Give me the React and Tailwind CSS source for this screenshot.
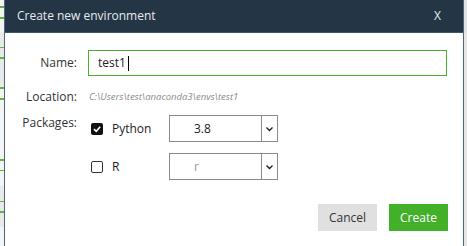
import React from "react";

const leftStrip = [
  { h: 6, c: "#f4f4f4" },
  { h: 2, c: "#5cb840" },
  { h: 10, c: "#f4f4f4" },
  { h: 2, c: "#5cb840" },
  { h: 13, c: "#f4f4f4" },
  { h: 15, c: "#e9e9e9" },
  { h: 2, c: "#5cb840" },
  { h: 9, c: "#e9e9e9" },
  { h: 2, c: "#5cb840" },
  { h: 29, c: "#e9e9e9" },
  { h: 2, c: "#5cb840" },
  { h: 9, c: "#f4f4f4" },
  { h: 2, c: "#5cb840" },
  { h: 61, c: "#f4f4f4" },
  { h: 2, c: "#5cb840" },
  { h: 9, c: "#f4f4f4" },
  { h: 2, c: "#5cb840" },
  { h: 15, c: "#f4f4f4" },
  { h: 15, c: "#e9e9e9" },
  { h: 2, c: "#5cb840" },
  { h: 9, c: "#e9e9e9" },
  { h: 2, c: "#5cb840" },
  { h: 14, c: "#e9e9e9" },
  { h: 20, c: "#f4f4f4" },
];

function Chevron() {
  return (
    <svg width="9" height="6" viewBox="0 0 9 6">
      <path d="M1.5 1.5 L4.5 4.5 L7.5 1.5" fill="none" stroke="#222" strokeWidth="1.4" />
    </svg>
  );
}

function Select({ value, muted }) {
  return (
    <div className="w-[109px] h-[27px] border border-[#8a8a8a] flex bg-white">
      <div
        className={
          "flex-1 flex items-center pl-[24px] text-[12px] " +
          (muted ? "text-[#9a9a9a]" : "text-[#222]")
        }
      >
        {value}
      </div>
      <div className="w-[16px] border-l border-[#8a8a8a] flex items-center justify-center">
        <Chevron />
      </div>
    </div>
  );
}

function CheckBox({ checked }) {
  if (checked) {
    return (
      <div className="w-[12px] h-[12px] bg-[#111] rounded-[2px] flex items-center justify-center">
        <svg width="10" height="10" viewBox="0 0 10 10">
          <path d="M2 5.2 L4.2 7.3 L8.2 2.8" fill="none" stroke="#fff" strokeWidth="1.6" />
        </svg>
      </div>
    );
  }
  return <div className="w-[12px] h-[12px] border-[1.5px] border-[#333] rounded-[2px] bg-white" />;
}

export default function App() {
  return (
    <div className="w-[467px] h-[246px] flex overflow-hidden bg-[#e8e8e8] font-['Open_Sans',sans-serif]">
      <div className="w-[4px] flex flex-col">
        {leftStrip.map((s, i) => (
          <div key={i} style={{ height: s.h, background: s.c }} />
        ))}
      </div>
      <div className="w-[460px] h-[246px] border-x border-[#4d6577] bg-white flex flex-col">
        <div className="h-[33px] bg-[#243545] border-b border-[#3e5566] flex items-center justify-between pl-[12px] pr-[22px]">
          <span className="text-[12px] text-[#e6ebef] leading-none">Create new environment</span>
          <span className="text-[12px] text-[#e6ebef] leading-none">X</span>
        </div>

        <div className="flex items-center mt-[17px]">
          <div className="w-[72px] text-right text-[12px] text-[#333]">Name:</div>
          <div className="ml-[11px] w-[359px] h-[26px] border border-[#4cae2e] flex items-center pl-[9px] text-[12px] text-[#222]">
            test1
            <span className="ml-[2px] w-[1px] h-[15px] bg-black" />
          </div>
        </div>

        <div className="flex items-center mt-[14px] h-[14px]">
          <div className="w-[72px] text-right text-[12px] text-[#333] leading-[14px]">Location:</div>
          <div className="ml-[12px] text-[9.5px] italic text-[#8a8a8a] leading-[14px]">
            C:\Users\test\anaconda3\envs\test1
          </div>
        </div>

        <div className="flex items-start mt-[11px]">
          <div className="w-[72px] text-right text-[12px] text-[#333] leading-[14px] pt-[1px]">Packages:</div>
          <div className="ml-[11px] flex flex-col gap-[11px]">
            <div className="flex items-center">
              <div className="w-[81px] flex items-center pl-[3px]">
                <CheckBox checked />
                <span className="ml-[9px] text-[12px] text-[#222]">Python</span>
              </div>
              <Select value="3.8" />
            </div>
            <div className="flex items-center">
              <div className="w-[81px] flex items-center pl-[3px]">
                <CheckBox />
                <span className="ml-[9px] text-[12px] text-[#222]">R</span>
              </div>
              <Select value="r" muted />
            </div>
          </div>
        </div>

        <div className="flex justify-end gap-[12px] mt-[24px] pr-[15px]">
          <div className="w-[59px] h-[27px] bg-[#e0e0e0] flex items-center justify-center text-[12px] text-[#333]">
            Cancel
          </div>
          <div className="w-[59px] h-[27px] bg-[#43b02a] flex items-center justify-center text-[12px] text-white">
            Create
          </div>
        </div>
      </div>
      <div className="w-[3px] flex flex-col">
        <div className="h-[33px] bg-[#dfe3e6]" />
        <div className="flex-1 bg-[#e6e6e6]" />
      </div>
    </div>
  );
}
